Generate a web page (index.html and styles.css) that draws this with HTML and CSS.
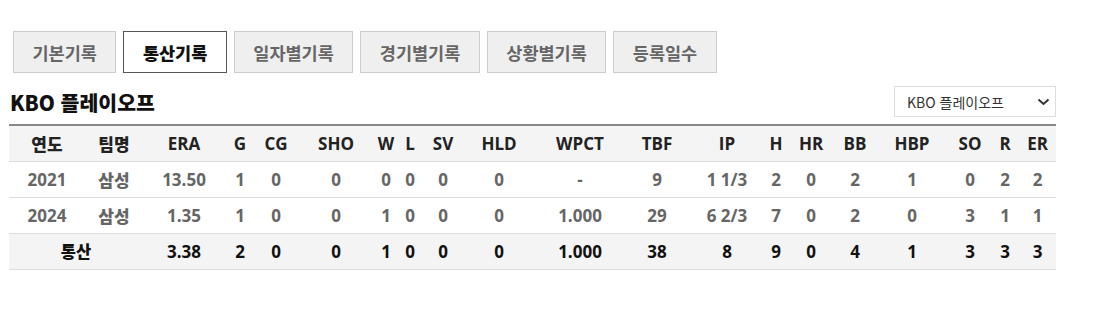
FILE: index.html
```html
<!DOCTYPE html>
<html lang="ko">
<head>
<meta charset="utf-8">
<link rel="stylesheet" href="styles.css">
</head>
<body>
<div class="wrap">
  <div class="tabs">
    <div class="tab">기본기록</div>
    <div class="tab active">통산기록</div>
    <div class="tab">일자별기록</div>
    <div class="tab">경기별기록</div>
    <div class="tab">상황별기록</div>
    <div class="tab">등록일수</div>
  </div>
  <div class="head">
    <h2 class="title">KBO 플레이오프</h2>
    <div class="select"><span>KBO 플레이오프</span>
      <svg width="13" height="8" viewBox="0 0 13 8"><path d="M1.5 1.5 L6.5 6 L11.5 1.5" fill="none" stroke="#333" stroke-width="2"/></svg>
    </div>
  </div>
  <table class="stats">
    <colgroup>
      <col style="width:76px"><col style="width:58px"><col style="width:82px"><col style="width:30px"><col style="width:42px"><col style="width:78px"><col style="width:22px"><col style="width:26px"><col style="width:40px"><col style="width:72px"><col style="width:90px"><col style="width:64px"><col style="width:76px"><col style="width:22px"><col style="width:48px"><col style="width:40px"><col style="width:74px"><col style="width:42px"><col style="width:28px"><col style="width:37px">
    </colgroup>
    <thead>
      <tr><th class="ko">연도</th><th class="ko">팀명</th><th>ERA</th><th>G</th><th>CG</th><th>SHO</th><th>W</th><th>L</th><th>SV</th><th>HLD</th><th>WPCT</th><th>TBF</th><th>IP</th><th>H</th><th>HR</th><th>BB</th><th>HBP</th><th>SO</th><th>R</th><th>ER</th></tr>
    </thead>
    <tbody>
      <tr><td>2021</td><td class="ko">삼성</td><td>13.50</td><td>1</td><td>0</td><td>0</td><td>0</td><td>0</td><td>0</td><td>0</td><td>-</td><td>9</td><td>1 1/3</td><td>2</td><td>0</td><td>2</td><td>1</td><td>0</td><td>2</td><td>2</td></tr>
      <tr><td>2024</td><td class="ko">삼성</td><td>1.35</td><td>1</td><td>0</td><td>0</td><td>1</td><td>0</td><td>0</td><td>0</td><td>1.000</td><td>29</td><td>6 2/3</td><td>7</td><td>0</td><td>2</td><td>0</td><td>3</td><td>1</td><td>1</td></tr>
      <tr class="total"><td colspan="2" class="ko sm">통산</td><td>3.38</td><td>2</td><td>0</td><td>0</td><td>1</td><td>0</td><td>0</td><td>0</td><td>1.000</td><td>38</td><td>8</td><td>9</td><td>0</td><td>4</td><td>1</td><td>3</td><td>3</td><td>3</td></tr>
    </tbody>
  </table>
</div>
</body>
</html>
```
FILE: styles.css
```css
* { box-sizing: border-box; }
body {
  margin: 0;
  background: #fff;
  font-family: "Noto Sans CJK KR", "Noto Sans", sans-serif;
  color: #222;
}
.wrap { padding: 31px 55px 0 9px; }
.tabs { display: flex; gap: 7px; margin-left: 4px; }
.tab {
  height: 42px;
  padding: 0 18.5px;
  display: flex;
  align-items: center;
  justify-content: center;
  font-size: 17.5px;
  font-weight: 700;
  color: #666;
  background: #efefef;
  border: 1px solid #ccc;
}
.tab.active { background: #fff; color: #111; border-color: #555; font-weight: 900; }
.head {
  display: flex;
  justify-content: space-between;
  align-items: center;
  margin-top: 13px;
  height: 31px;
}
.title {
  margin: 0 0 0 1px;
  font-size: 20.5px;
  font-weight: 900;
  color: #111;
}
.select {
  width: 162px;
  height: 31px;
  border: 1px solid #ddd;
  display: flex;
  align-items: center;
  justify-content: space-between;
  padding: 0 5px 0 12px;
  font-size: 14px;
  color: #333;
}
.stats {
  margin-top: 7px;
  width: 1047px;
  border-collapse: collapse;
  table-layout: fixed;
  border-top: 2px solid #888;
}
.stats th, .stats td {
  height: 36px;
  padding: 0;
  text-align: center;
  font-family: "Open Sans", "Noto Sans CJK KR", sans-serif;
  font-weight: 700;
  font-size: 17px;
  border-bottom: 1px solid #ddd;
  white-space: nowrap;
}
.stats thead tr { background: #f4f4f4; }
.stats th { color: #222; }
.stats td { color: #666; }
.stats .ko { font-family: "Noto Sans CJK KR", sans-serif; font-size: 17px; font-weight: 900; }
.stats .total { background: #f4f4f4; }
.stats .total td { color: #111; }
.stats .sm { font-size: 16.5px; }
```
